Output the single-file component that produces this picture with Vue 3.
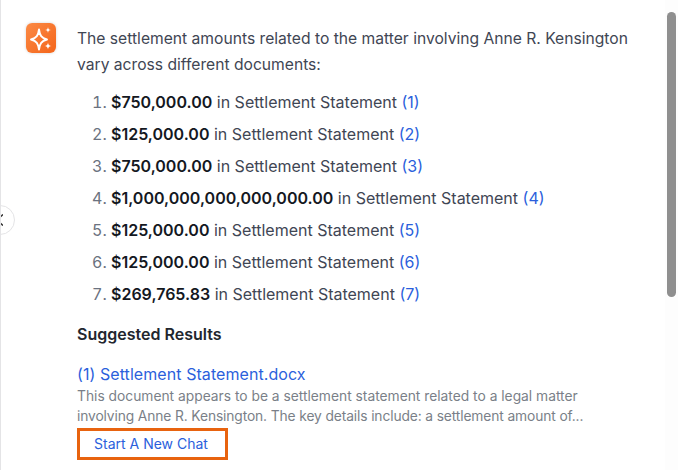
<script setup>
const rows = [
  ['$750,000.00', 1],
  ['$125,000.00', 2],
  ['$750,000.00', 3],
  ['$1,000,000,000,000,000.00', 4],
  ['$125,000.00', 5],
  ['$125,000.00', 6],
  ['$269,765.83', 7],
]
</script>

<template>
  <div class="page">
    <main class="chat">
      <div class="avatar">
        <svg viewBox="0 0 30 30" width="30" height="30">
          <path d="M13 6.5 C13.8 12.5 15.3 15 21 16.5 C15.3 18 13.8 20.5 13 26.5 C12.2 20.5 10.7 18 5 16.5 C10.7 15 12.2 12.5 13 6.5 Z" fill="none" stroke="#fff" stroke-width="1.9" stroke-linejoin="round"/>
          <path d="M22 4 C22.2 6 23 6.8 25 7 C23 7.2 22.2 8 22 10 C21.8 8 21 7.2 19 7 C21 6.8 21.8 6 22 4 Z" fill="#fff"/>
          <path d="M22 19.5 C22.2 21.7 23.3 22.8 25.5 23 C23.3 23.2 22.2 24.3 22 26.5 C21.8 24.3 20.7 23.2 18.5 23 C20.7 22.8 21.8 21.7 22 19.5 Z" fill="#fff"/>
        </svg>
      </div>
      <div class="body">
        <p class="intro">The settlement amounts related to the matter involving Anne R. Kensington vary across different documents:</p>
        <ol class="list">
          <li v-for="r in rows" :key="r[1]">
            <b>{{ r[0] }}</b> in Settlement Statement <a>({{ r[1] }})</a>
          </li>
        </ol>
        <h3 class="heading">Suggested Results</h3>
        <a class="doc">(1) Settlement Statement.docx</a>
        <p class="summary">This document appears to be a settlement statement related to a legal matter <span class="tight">involving Anne R. Kensington. The key details include: a settlement amount of...</span></p>
        <button class="cta">Start A New Chat</button>
      </div>
    </main>
    <div class="toggle">
      <svg viewBox="0 0 10 12" width="10" height="12"><path d="M10 0.5 L4 6 L10 11.5" fill="none" stroke="#333" stroke-width="1.5"/></svg>
    </div>
    <div class="track"><div class="thumb"></div></div>
  </div>
</template>

<style>
html, body { margin: 0; background: #fff; overflow: hidden; }
</style>

<style scoped>
.page {
  width: 678px;
  height: 470px;
  position: relative;
  overflow: hidden;
  display: flex;
  box-sizing: border-box;
  border-left: 1px solid #e4e4e6;
  background: #fff;
  font-family: Inter, "Noto Sans", sans-serif;
  color: #3f4654;
}
.chat {
  flex: 1;
  display: flex;
  align-items: flex-start;
  gap: 21px;
  padding: 23px 0 0 25px;
  min-width: 0;
}
.avatar {
  width: 30px;
  height: 30px;
  flex: none;
  border-radius: 6px;
  background: linear-gradient(135deg, #fb8a45, #f4651a);
  box-shadow: 0 0 3px rgba(0,0,0,.18);
}
.avatar svg { display: block; }
.body { width: 570px; padding-top: 3px; }
.intro {
  margin: 0;
  font-size: 15.65px;
  line-height: 26px;
  width: 560px;
}
.list {
  margin: 8px 0 0;
  padding: 0 0 0 34px;
  font-size: 16px;
  line-height: 32px;
}
.list li::marker { color: #6b7280; }
.list b { color: #14181f; font-weight: 600; }
.list a { color: #2b5fdc; }
.heading {
  margin: 8px 0 0;
  font-size: 16px;
  line-height: 32px;
  font-weight: 600;
  color: #22262e;
}
.doc {
  display: block;
  margin-top: 13px;
  font-size: 16px;
  line-height: 22px;
  color: #2b5fdc;
  letter-spacing: .07px;
}
.summary {
  margin: 1px 0 0;
  font-size: 13.8px;
  line-height: 20px;
  color: #7a7f88;
  width: 530px;
}
.tight { letter-spacing: -.12px; }
.cta {
  display: block;
  margin-top: 2px;
  width: 151px;
  height: 32px;
  box-sizing: border-box;
  background: #fff;
  border: 3px solid #e8630f;
  color: #2b5fdc;
  font: 14px/1 Inter, sans-serif;
  padding: 0 3px 0 0;
}
.toggle {
  position: absolute;
  left: -16px;
  top: 205px;
  width: 30px;
  height: 30px;
  box-sizing: border-box;
  border: 1px solid #e4e4e6;
  border-radius: 50%;
  background: #fff;
  display: flex;
  align-items: center;
  justify-content: flex-end;
  padding-right: 11px;
}
.track {
  flex: none;
  width: 13px;
  background: #fdfdfd;
  padding: 12px 2px 0 2px;
  box-sizing: border-box;
}
.thumb {
  width: 9px;
  height: 285px;
  border-radius: 5px;
  background: #8f8f8f;
}
</style>
